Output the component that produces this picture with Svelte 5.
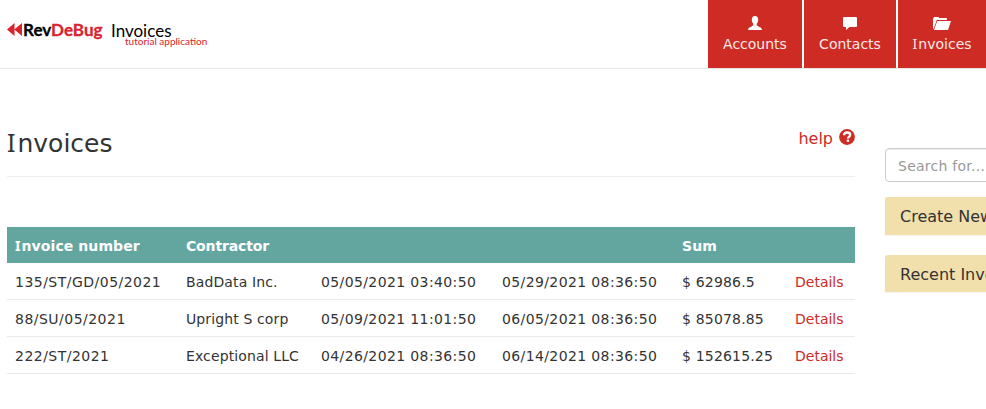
<script>
  const nav = [
    { label: 'Accounts', icon: 'user', width: 94 },
    { label: 'Contacts', icon: 'comment', width: 92 },
    { label: 'Invoices', icon: 'folder', width: 88 }
  ];
  const columns = [171, 135, 181, 180, 113, 68];
  const invoices = [
    { number: '135/ST/GD/05/2021', contractor: 'BadData Inc.', issued: '05/05/2021 03:40:50', due: '05/29/2021 08:36:50', sum: '$ 62986.5' },
    { number: '88/SU/05/2021', contractor: 'Upright S corp', issued: '05/09/2021 11:01:50', due: '06/05/2021 08:36:50', sum: '$ 85078.85' },
    { number: '222/ST/2021', contractor: 'Exceptional LLC', issued: '04/26/2021 08:36:50', due: '06/14/2021 08:36:50', sum: '$ 152615.25' }
  ];
</script>

<div class="page">
  <header>
    <a class="logo" href="#home" aria-label="RevDeBug Invoices">
      <svg width="215" height="34" viewBox="0 0 215 34">
        <path d="M7 12.500 14.500 6v13zM14.300 12.500 22 6v13z" fill="#d9232e" />
        <text x="23" y="19" class="brand" textLength="79.500" lengthAdjust="spacingAndGlyphs">Rev<tspan fill="#d9232e">DeBug</tspan></text>
        <text x="111" y="19.500" class="product" textLength="60.500" lengthAdjust="spacingAndGlyphs">Invoices</text>
        <text x="125" y="28" class="tagline">tutorial application</text>
      </svg>
    </a>
    <nav>
      {#each nav as item}
        <a href="#{item.label}" style="width: {item.width}px">
          {#if item.icon === 'user'}
            <svg width="16" height="16" viewBox="0 0 16 16"><path d="M8 1C5.900 1 4.700 2.500 4.800 4.700c0 1.700.6 3.200 1.500 4v1.100c0 .7-.5 1-1.300 1.400-2 .9-3.700 1.400-4 3.800h14c-.3-2.400-2-2.900-4-3.800-.8-.4-1.300-.7-1.300-1.400V8.700c.9-.8 1.500-2.300 1.500-4C11.300 2.500 10.100 1 8 1z" /></svg>
          {:else if item.icon === 'comment'}
            <svg width="16" height="16" viewBox="0 0 16 16"><path d="M2 2h12q1 0 1 1v8q0 1-1 1H7.500L4 15v-3H2q-1 0-1-1V3q0-1 1-1z" /></svg>
          {:else}
            <svg width="18" height="16" viewBox="0 0 18 16"><path d="M0 14V4l1-2h4.500l.7 1H13q1 0 1 1v1H3.700L1 13zM4.200 6H18l-3 9H1z" /></svg>
          {/if}
          <span class="label" class:capital-i={item.label[0] === 'I'}>{item.label}</span>
        </a>
      {/each}
    </nav>
  </header>

  <div class="content">
    <main>
      <div class="title">
        <h1 class="capital-i">Invoices</h1>
        <a class="help" href="#help">
          <span>help</span>
          <svg width="16" height="16" viewBox="0 0 16 16">
            <circle cx="8" cy="8" r="7.900" fill="#cd2b24" />
            <path d="M5 6.200C5 4 6.200 3.500 8.100 3.500c2 0 3.100.8 3.100 2.300 0 2.200-2.300 1.900-2.300 3.800" fill="none" stroke="#fff" stroke-width="2.300" />
            <path d="M7.700 10.600h2.400v2.200H7.700z" fill="#fff" />
          </svg>
        </a>
      </div>
      <table>
        <colgroup>
          {#each columns as width}<col style="width: {width}px" />{/each}
        </colgroup>
        <thead>
          <tr>
            <th><div class="capital-i">Invoice number</div></th>
            <th class="contractor">Contractor</th>
            <th></th>
            <th></th>
            <th>Sum</th>
            <th></th>
          </tr>
        </thead>
        <tbody>
          {#each invoices as row}
            <tr>
              <td class="number">{row.number}</td>
              <td class="name">{row.contractor}</td>
              <td class="date">{row.issued}</td>
              <td class="date">{row.due}</td>
              <td class="sum">{row.sum}</td>
              <td><a href="#details">Details</a></td>
            </tr>
          {/each}
        </tbody>
      </table>
    </main>
    <aside>
      <input type="text" placeholder="Search for..." />
      <div class="panel">Create New</div>
      <div class="panel">Recent Invoices</div>
    </aside>
  </div>
</div>

<style>
  :global(body) {
    background: #fff;
  }
  .page {
    width: 100%;
    height: 409px;
    overflow: hidden;
    color: #333;
    font: 14px/20px Verdana, 'DejaVu Sans', sans-serif;
  }
  a {
    color: #cd2b24;
    text-decoration: none;
  }
  header {
    display: flex;
    justify-content: space-between;
    box-sizing: border-box;
    height: 69px;
    border-bottom: 1px solid #e7e7e7;
  }
  .logo {
    padding-top: 17px;
  }
  .logo svg {
    display: block;
  }
  .brand {
    font: 700 17.5px Lato, sans-serif;
    fill: #000;
    stroke: #000;
    stroke-width: 0.3px;
  }
  .brand tspan {
    stroke: #d9232e;
  }
  .product {
    font: 400 18px Lato, sans-serif;
    fill: #000;
  }
  .tagline {
    font: 400 10px Lato, sans-serif;
    fill: #d9232e;
  }
  nav {
    display: flex;
    gap: 2px;
  }
  nav a {
    display: flex;
    flex-direction: column;
    align-items: center;
    box-sizing: border-box;
    height: 68px;
    padding-top: 15px;
    background: #cd2b24;
    color: #f9e9e8;
  }
  nav svg {
    fill: #fff;
  }
  .label {
    display: block;
    margin-top: 3px;
    white-space: nowrap;
  }
  .capital-i::first-letter {
    font-family: 'Noto Sans', sans-serif;
    letter-spacing: 0.08em;
  }
  .content {
    display: flex;
    gap: 30px;
    padding-left: 7px;
  }
  main {
    flex: none;
    width: 848px;
  }
  .title {
    display: flex;
    justify-content: space-between;
    box-sizing: border-box;
    height: 108px;
    border-bottom: 1px solid #eee;
  }
  h1 {
    margin: 57px 0 0;
    font-size: 25px;
    font-weight: 400;
    line-height: 32px;
  }
  .help {
    display: flex;
    gap: 6px;
    align-items: center;
    height: 20px;
    margin-top: 60px;
    font-size: 16px;
  }
  .help svg {
    margin-top: -4px;
  }
  table {
    width: 848px;
    margin-top: 50px;
    border-collapse: separate;
    border-spacing: 0;
    table-layout: fixed;
  }
  th,
  td {
    padding: 9px 0 7px 8px;
    text-align: left;
    white-space: nowrap;
  }
  th {
    height: 20px;
    background: #63a69f;
    color: #fff;
    letter-spacing: 0.08px;
  }
  .contractor {
    letter-spacing: -0.15px;
  }
  td {
    border-bottom: 1px solid #e9e9e9;
  }
  .number {
    letter-spacing: 0.48px;
  }
  .name {
    letter-spacing: 0.12px;
  }
  .date {
    letter-spacing: 0.38px;
  }
  .sum {
    letter-spacing: 0.18px;
  }
  aside {
    flex: none;
    width: 263px;
    padding-top: 79px;
  }
  input {
    display: block;
    box-sizing: border-box;
    width: 100%;
    height: 34px;
    padding: 7px 12px 5px;
    border: 1px solid #ccc;
    border-radius: 4px;
    box-shadow: inset 0 1px 1px rgba(0, 0, 0, 0.075);
    font: inherit;
    letter-spacing: 0.25px;
  }
  input::placeholder {
    color: #999;
    opacity: 1;
  }
  .panel {
    box-sizing: border-box;
    height: 38px;
    margin-top: 15px;
    padding: 10px 15px 8px;
    border-radius: 3px 3px 0 0;
    background: #f2e0ac;
    box-shadow: 0 1px 1px rgba(0, 0, 0, 0.05);
    font-size: 16px;
  }
  .panel + .panel {
    margin-top: 20px;
    height: 37px;
  }
</style>
